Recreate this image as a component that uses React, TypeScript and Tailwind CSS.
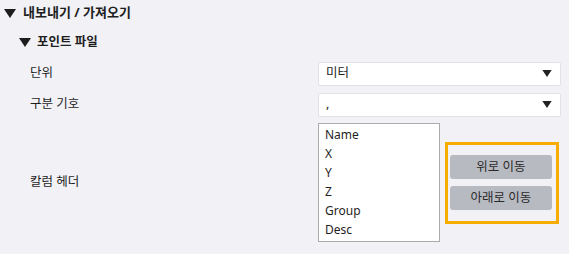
const columns = ['Name', 'X', 'Y', 'Z', 'Group', 'Desc'];

const font = { fontFamily: '"Noto Sans", "Noto Sans CJK KR", sans-serif' };

function Caret({ className }: { className?: string }) {
  return (
    <svg viewBox="0 0 12 9" className={className}>
      <polygon points="0,0 12,0 6,9" fill="currentColor" />
    </svg>
  );
}

function Select({ value }: { value: string }) {
  return (
    <div className="flex h-6 w-[243px] items-center justify-between rounded-[2px] border border-[#e1e1e7] bg-white pl-[7px] pr-[8px]">
      <span className="text-[12.5px] text-[#222]">{value}</span>
      <Caret className="h-[7px] w-[10px] text-[#222]" />
    </div>
  );
}

export default function App() {
  return (
    <div className="h-[254px] w-[569px] overflow-hidden bg-[#f1f1f6] text-[#1e1e1e]" style={font}>
      <div className="flex h-[26px] items-center pl-[4px]">
        <Caret className="h-[9px] w-[12px] text-[#1e1e1e]" />
        <span className="ml-[7px] text-[13px] font-bold">내보내기 / 가져오기</span>
      </div>

      <div className="flex h-[32px] items-center pl-[19px]">
        <Caret className="h-[9px] w-[12px] text-[#1e1e1e]" />
        <span className="ml-[6px] text-[12.5px] font-bold">포인트 파일</span>
      </div>

      <div className="flex h-[31px] items-center pl-[30px]">
        <span className="w-[288px] text-[12.5px]">단위</span>
        <Select value="미터" />
      </div>

      <div className="flex h-[31px] items-center pl-[30px]">
        <span className="w-[288px] text-[12.5px]">구분 기호</span>
        <Select value="," />
      </div>

      <div className="mt-[3px] flex items-center pl-[30px]">
        <span className="w-[288px] text-[12.5px]">칼럼 헤더</span>
        <div className="h-[119px] w-[122px] border border-[#ababab] bg-white pt-[1px]">
          {columns.map(c => (
            <div key={c} className="flex h-[19px] items-center pl-[6px] text-[12px]">
              {c}
            </div>
          ))}
        </div>
        <div className="ml-[5px] flex h-[82px] w-[114px] flex-col justify-center gap-[7px] border-[3px] border-[#f6ac00] pl-[2px]">
          <button className="h-6 w-[102px] rounded-[3px] bg-[#b8bac2] text-[12.5px] text-[#2a2a2a]">위로 이동</button>
          <button className="h-6 w-[102px] rounded-[3px] bg-[#b8bac2] text-[12.5px] text-[#2a2a2a]">아래로 이동</button>
        </div>
      </div>
    </div>
  );
}
